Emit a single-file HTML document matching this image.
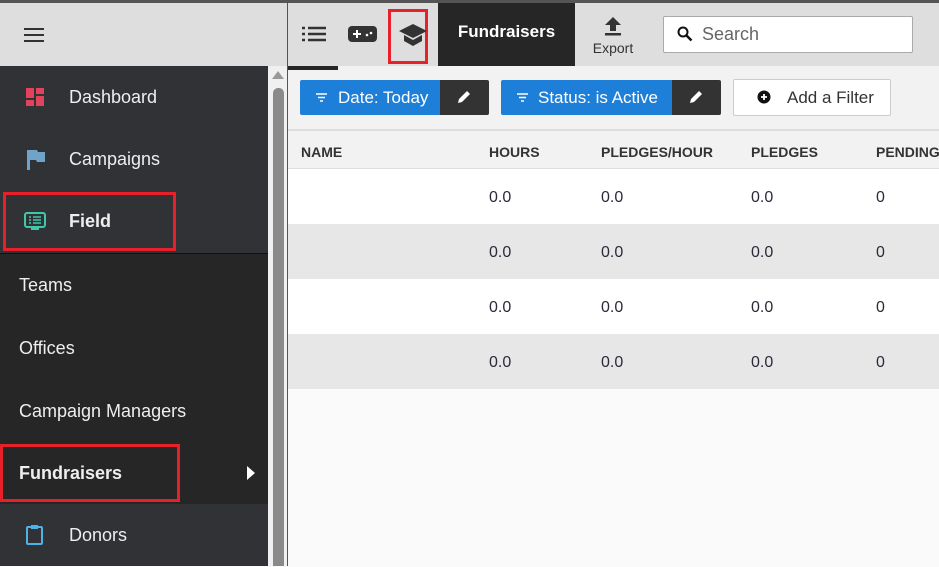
<!DOCTYPE html>
<html><head><style>
*{margin:0;padding:0;box-sizing:border-box}
body{width:939px;height:566px;overflow:hidden;position:relative;font-family:"Liberation Sans",Arial,sans-serif;background:#fafafa}
.a{position:absolute}
.nav{position:absolute;left:0;width:268px;height:63px;color:#eee;font-size:18px;line-height:63px}
.nav .t{position:absolute;left:69px}
.sub .t{left:19px}
.th{position:absolute;top:131px;font-size:14px;font-weight:bold;color:#333;line-height:42px}
.row{position:absolute;left:288px;width:651px;height:55px}
.row span{position:absolute;top:0;line-height:57px;font-size:16px;color:#2a2a3a}
</style></head><body>
<div class="a" style="left:0;top:0;width:939px;height:3px;background:#555"></div>
<div class="a" style="left:0;top:3px;width:287px;height:63px;background:#dedede"></div>
<div class="a" style="left:24px;top:28px;width:20px;height:2px;background:#333;box-shadow:0 6px 0 #333,0 12px 0 #333"></div>
<div class="a" style="left:0;top:66px;width:268px;height:500px;background:#262626"></div>
<div class="nav" style="top:66px;background:#313236"><svg class="a" style="left:26px;top:22px" width="18" height="18"><rect x="0" y="0" width="8" height="10" fill="#e0435b"/><rect x="10" y="0" width="8" height="6" fill="#e0435b"/><rect x="0" y="12" width="8" height="6" fill="#e0435b"/><rect x="10" y="8" width="8" height="10" fill="#e0435b"/></svg><span class="t">Dashboard</span></div>
<div class="nav" style="top:128px;background:#313236"><svg class="a" style="left:26px;top:21px" width="20" height="22"><path d="M1 1h10l1 2h7v10h-8l-1-2H4v10H1z" fill="#6fa3c7"/></svg><span class="t">Campaigns</span></div>
<div class="nav" style="top:190px;height:64px;background:#313236;border-bottom:1px solid #111"><svg class="a" style="left:24px;top:21px" width="22" height="22"><rect x="1" y="2" width="20" height="14" rx="2" fill="none" stroke="#3ec7a8" stroke-width="2"/><rect x="7" y="16" width="8" height="3" fill="#3ec7a8"/><path d="M5 6h2M9 6h8M5 9h2M9 9h8M5 12h2M9 12h8" stroke="#3ec7a8" stroke-width="1.5"/></svg><span class="t" style="font-weight:bold">Field</span></div>
<div class="a" style="left:3px;top:192px;width:173px;height:59px;border:3px solid #e8202a"></div>
<div class="nav sub" style="top:254px"><span class="t">Teams</span></div>
<div class="nav sub" style="top:317px"><span class="t">Offices</span></div>
<div class="nav sub" style="top:380px"><span class="t">Campaign Managers</span></div>
<div class="nav sub" style="top:442px;border-bottom:1px solid #111"><span class="t" style="font-weight:bold">Fundraisers</span><span class="a" style="left:247px;top:24px;width:0;height:0;border-left:8px solid #fff;border-top:7px solid transparent;border-bottom:7px solid transparent"></span></div>
<div class="a" style="left:0;top:444px;width:180px;height:58px;border:3px solid #e8202a"></div>
<div class="nav" style="top:504px;height:62px;background:#313236"><svg class="a" style="left:26px;top:20px" width="18" height="22"><rect x="1" y="3" width="15" height="17" rx="1" fill="none" stroke="#4ab3e8" stroke-width="2"/><rect x="5" y="1" width="7" height="4" fill="#4ab3e8"/></svg><span class="t">Donors</span></div>
<div class="a" style="left:268px;top:66px;width:19px;height:500px;background:#f0f0f0"></div>
<div class="a" style="left:272px;top:71px;width:0;height:0;border-bottom:8px solid #999;border-left:6px solid transparent;border-right:6px solid transparent"></div>
<div class="a" style="left:273px;top:88px;width:11px;height:478px;background:#8a8a8a;border-radius:5px 5px 0 0"></div>
<div class="a" style="left:287px;top:3px;width:1px;height:563px;background:#555"></div>
<div class="a" style="left:288px;top:3px;width:651px;height:63px;background:#dedede"></div>
<svg class="a" style="left:302px;top:26px" width="24" height="16"><path d="M0 2h3M6 2h18M0 8h3M6 8h18M0 14h3M6 14h18" stroke="#333" stroke-width="2.5"/></svg>
<svg class="a" style="left:348px;top:25px" width="30" height="18"><rect x="0" y="1" width="29" height="16" rx="4" fill="#333"/><path d="M5 9h8M9 5v8" stroke="#fff" stroke-width="2"/><circle cx="19" cy="10" r="1.3" fill="#fff"/><circle cx="23" cy="8" r="1.3" fill="#fff"/></svg>
<div class="a" style="left:388px;top:9px;width:40px;height:55px;border:3px solid #e8202a"></div>
<svg class="a" style="left:398px;top:22px" width="30" height="26"><path d="M1 9L15 2l14 7-14 7z" fill="#333"/><path d="M6 13v6l9 5 9-5v-6l-9 5z" fill="#333"/></svg>
<div class="a" style="left:438px;top:3px;width:137px;height:63px;background:#262626;color:#fff;font-weight:bold;font-size:17px;line-height:58px;text-align:center">Fundraisers</div>
<svg class="a" style="left:603px;top:16px" width="20" height="20"><path d="M10 1l8 8h-5v6H7V9H2z" fill="#333"/><rect x="2" y="17" width="16" height="2.5" fill="#333"/></svg>
<div class="a" style="left:588px;top:40px;width:50px;text-align:center;font-size:14px;color:#333">Export</div>
<div class="a" style="left:663px;top:16px;width:250px;height:37px;background:#fff;border:1px solid #aaa;border-radius:2px"></div>
<svg class="a" style="left:677px;top:26px" width="16" height="16"><circle cx="6" cy="6" r="4.5" fill="none" stroke="#111" stroke-width="2"/><path d="M9.5 9.5l5 5" stroke="#111" stroke-width="2.5"/></svg>
<div class="a" style="left:702px;top:24px;font-size:18px;color:#666">Search</div>
<div class="a" style="left:288px;top:66px;width:651px;height:65px;background:#f2f2f2;border-bottom:2px solid #ddd"></div>
<div class="a" style="left:288px;top:66px;width:50px;height:4px;background:#262626"></div>
<div class="a" style="left:300px;top:80px;width:140px;height:35px;background:#1e7fd8;border-radius:2px 0 0 2px;color:#fff;font-size:17px;line-height:35px;padding-left:38px">Date: Today</div>
<svg class="a" style="left:316px;top:93px" width="11" height="9"><path d="M0 1h11M2 4.5h7M4 8h3" stroke="#fff" stroke-width="1.4"/></svg>
<div class="a" style="left:440px;top:80px;width:49px;height:35px;background:#333;border-radius:0 2px 2px 0"></div>
<svg class="a" style="left:457px;top:90px" width="14" height="14"><path d="M1 13l1-4 8-8 3 3-8 8z" fill="#fff"/></svg>
<div class="a" style="left:501px;top:80px;width:171px;height:35px;background:#1e7fd8;border-radius:2px 0 0 2px;color:#fff;font-size:17px;line-height:35px;padding-left:37px">Status: is Active</div>
<svg class="a" style="left:517px;top:93px" width="11" height="9"><path d="M0 1h11M2 4.5h7M4 8h3" stroke="#fff" stroke-width="1.4"/></svg>
<div class="a" style="left:672px;top:80px;width:49px;height:35px;background:#333;border-radius:0 2px 2px 0"></div>
<svg class="a" style="left:689px;top:90px" width="14" height="14"><path d="M1 13l1-4 8-8 3 3-8 8z" fill="#fff"/></svg>
<div class="a" style="left:733px;top:79px;width:158px;height:37px;background:#fff;border:1px solid #ccc;border-radius:2px;font-size:17px;line-height:35px;color:#333;padding-left:53px">Add a Filter</div>
<svg class="a" style="left:757px;top:90px" width="14" height="14"><circle cx="7" cy="7" r="6.5" fill="#111"/><path d="M4 7h6M7 4v6" stroke="#fff" stroke-width="1.8"/></svg>
<div class="a" style="left:288px;top:131px;width:651px;height:38px;background:#f2f2f2;border-bottom:1px solid #ddd"></div>
<div class="th" style="left:301px">NAME</div>
<div class="th" style="left:489px">HOURS</div>
<div class="th" style="left:601px">PLEDGES/HOUR</div>
<div class="th" style="left:751px">PLEDGES</div>
<div class="th" style="left:876px">PENDING</div>
<div class="row" style="top:169px;background:#fff"><span style="left:201px">0.0</span><span style="left:313px">0.0</span><span style="left:463px">0.0</span><span style="left:588px">0</span></div>
<div class="row" style="top:224px;background:#e7e7e7"><span style="left:201px">0.0</span><span style="left:313px">0.0</span><span style="left:463px">0.0</span><span style="left:588px">0</span></div>
<div class="row" style="top:279px;background:#fff"><span style="left:201px">0.0</span><span style="left:313px">0.0</span><span style="left:463px">0.0</span><span style="left:588px">0</span></div>
<div class="row" style="top:334px;background:#e7e7e7"><span style="left:201px">0.0</span><span style="left:313px">0.0</span><span style="left:463px">0.0</span><span style="left:588px">0</span></div>
</body></html>
